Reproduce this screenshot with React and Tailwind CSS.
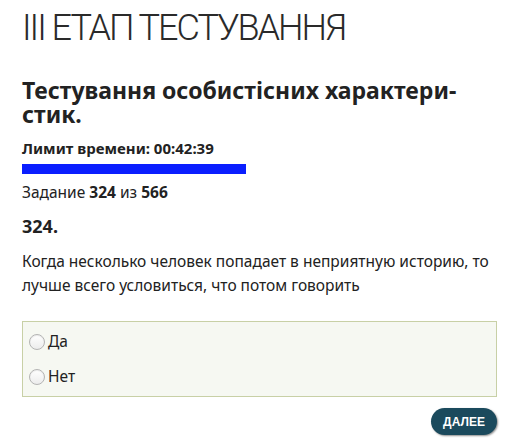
export default function App() {
  return (
    <div className="min-h-screen bg-white text-[#222] font-['Noto_Sans',Arial,sans-serif]">
      <div className="w-[475px] ml-[22px] flex flex-col">
        <h1 className="mt-2 text-[36px] leading-[40px] font-light font-['Roboto',sans-serif] tracking-[-2px] text-[#2a2a2a]">
          III ЕТАП ТЕСТУВАННЯ
        </h1>

        <h2 className="mt-[30px] text-[23px] leading-[24px] font-bold">
          Тестування особистісних характери-
          <br />
          стик.
        </h2>

        <p className="mt-[12px] text-[15px] leading-[20px] font-bold">Лимит времени: 00:42:39</p>
        <div className="mt-[6px] h-[10px] w-[224px] bg-[#0a1eff]" />

        <p className="mt-[8px] text-[15.5px] leading-[20px]">
          Задание <b>324</b> из <b>566</b>
        </p>

        <p className="mt-3 text-[18px] leading-[24px] font-bold">324.</p>

        <p className="mt-[11px] text-[15.5px] leading-[24px]">
          Когда несколько человек попадает в неприятную историю, то лучше всего условиться, что потом говорить
        </p>

        <div className="mt-[24px] border border-[#c8d0a6] bg-[#f6f8f2] py-[2px] pl-[6px]">
          {['Да', 'Нет'].map((label) => (
            <label key={label} className="flex h-[35px] items-center gap-[3px] text-[15.5px]">
              <span className="h-4 w-4 rounded-full border border-[#b4b4b4] bg-gradient-to-b from-white to-[#ececec] shadow-[inset_0_1px_1px_rgba(0,0,0,0.08)]" />
              {label}
            </label>
          ))}
        </div>

        <button className="mt-[11px] self-end h-[27px] w-[66px] rounded-full bg-[#1b4a5d] font-['Liberation_Sans',Arial,sans-serif] text-[12px] font-bold uppercase text-white shadow-[1px_1px_2px_rgba(0,0,0,0.45)]">
          Далее
        </button>
      </div>
    </div>
  );
}
